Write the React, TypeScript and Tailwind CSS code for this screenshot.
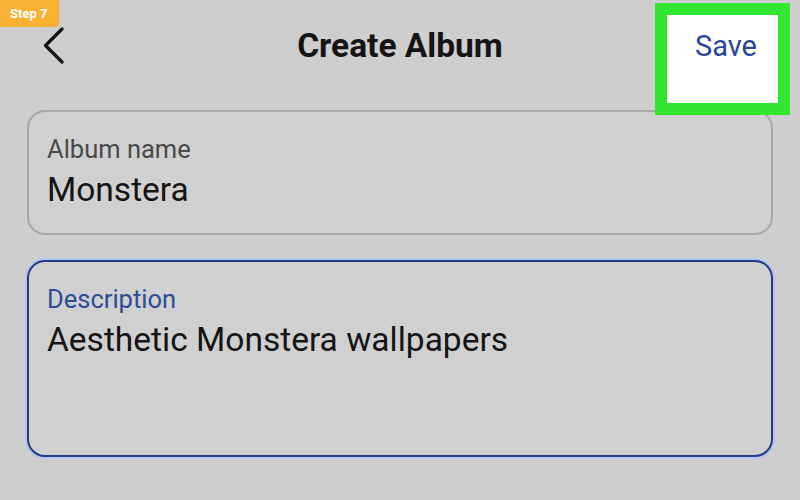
import React from "react";

export default function App() {
  return (
    <div className="relative w-[800px] h-[500px] overflow-hidden bg-[#cecece] font-['Roboto',sans-serif]">
      {/* Step badge */}
      <div className="absolute left-0 top-0 z-20 flex h-[27px] w-[59px] items-center rounded-br-[4px] bg-[#f8b133] pl-[10px] text-[13px] font-bold text-white">
        Step 7
      </div>

      {/* Highlight annotation around Save */}
      <div className="absolute left-[655px] top-[3px] z-10 h-[112px] w-[135px] border-[12px] border-[#30e630] bg-white" />

      {/* Header */}
      <div className="grid h-[92px] grid-cols-[1fr_auto_1fr] items-center px-[43px]">
        <div className="flex items-center">
          <svg width="22" height="38" viewBox="0 0 22 38" fill="none">
            <path d="M19 2 L2.5 18.5 L19 35" stroke="#111" strokeWidth="3.2" strokeLinecap="round" strokeLinejoin="round" />
          </svg>
        </div>
        <div className="text-[33.5px] font-bold leading-none text-[#141414]">Create Album</div>
        <div className="relative z-20 flex justify-end">
          <span className="text-[29px] leading-none text-[#28459a]">Save</span>
        </div>
      </div>

      {/* Fields */}
      <div className="mt-[18px] flex flex-col gap-[25px] px-[27px]">
        <div className="h-[125px] rounded-[18px] border-2 border-[#a8a8a8] bg-[#d0d0d0] px-[18px] pt-[22px]">
          <div className="text-[25.5px] leading-[30px] text-[#4a4a4a]">Album name</div>
          <div className="mt-[6px] text-[33.5px] leading-[40px] text-[#141414]">Monstera</div>
        </div>
        <div className="h-[197px] rounded-[18px] border-2 border-[#243b86] bg-[#d0d0d0] px-[18px] pt-[22px] shadow-[0_0_0_2px_#b7c7ee]">
          <div className="text-[25.5px] leading-[30px] text-[#2c4c94]">Description</div>
          <div className="mt-[6px] text-[33.5px] leading-[40px] text-[#141414]">Aesthetic Monstera wallpapers</div>
        </div>
      </div>
    </div>
  );
}
